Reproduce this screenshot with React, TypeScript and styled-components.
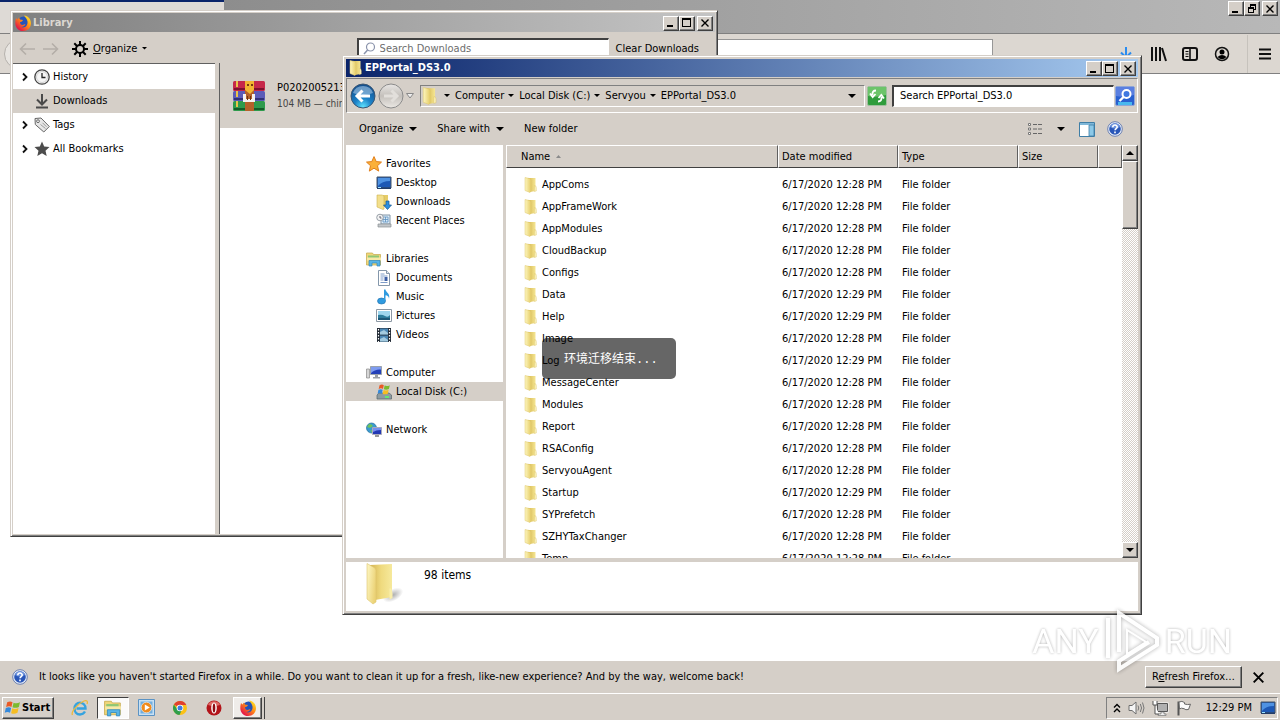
import React from 'react';
import styled, { createGlobalStyle, css } from 'styled-components';

const face = '#d5cfc8';
const GlobalStyle = createGlobalStyle`
  * { box-sizing: border-box; }
  body { margin: 0; overflow: hidden; background: #fff; }
  body, button, input, table {
    font-family: "DejaVu Sans Condensed", "DejaVu Sans", "Noto Sans CJK SC", sans-serif;
    font-size: 11px;
    line-height: 16px;
    color: #000;
  }
  svg { display: block; flex: none; }
  button { padding: 0; border: 0; background: none; white-space: nowrap; }
  ul { list-style: none; margin: 0; padding: 0; }
`;

const raised = css`
  border: 1px solid;
  border-color: #fff #404040 #404040 #fff;
  box-shadow: inset -1px -1px 0 #808080;
  background: ${face};
`;
const sunken = css`
  border: 1px solid;
  border-color: #808080 #fff #fff #808080;
`;

/* ---------- desktop and browser ---------- */
const Desktop = styled.div`
  position: relative;
  display: flex;
  flex-direction: column;
  height: 100vh;
  overflow: hidden;
`;
const TabStrip = styled.header`
  display: flex;
  justify-content: space-between;
  align-items: flex-start;
  height: 33px;
  background: linear-gradient(90deg, #848484, #b8b8b8);
`;
const BrowserTab = styled.div`
  width: 224px;
  height: 33px;
  border-top: 2px solid #0a246a;
  background: #dedad6;
`;
const CaptionButtons = styled.div`
  display: flex;
  padding: 1px 2px 0 0;
  button:last-child { margin-left: 2px; }
`;
const CaptionButton = styled.button`
  ${raised}
  display: flex;
  align-items: center;
  justify-content: center;
  width: 16px;
  height: 15px;
`;
const BrowserBar = styled.div`
  display: flex;
  align-items: center;
  height: 41px;
  padding: 0 7px 0 4px;
  border-top: 1px solid #808080;
  border-bottom: 1px solid #808080;
  background: #dcd7d1;
`;
const RoundBack = styled.button`
  width: 30px;
  height: 30px;
  border: 1px solid #b5b1ac;
  border-radius: 50%;
  background: #e8e5e1;
`;
const UrlInput = styled.input`
  flex: 1;
  height: 30px;
  margin: 0 124px 0 90px;
  border: 1px solid #979797;
  background: #fff;
`;
const BrowserTools = styled.div`
  display: flex;
  align-items: center;
  gap: 14px;
`;
const ToolButton = styled.button<{ $divided?: boolean }>`
  display: flex;
  align-items: center;
  justify-content: center;
  width: 18px;
  height: 38px;
  ${p => p.$divided && css`
    width: 26px;
    margin-left: 2px;
    padding-left: 8px;
    border-left: 1px solid #c6c2bc;
  `}
`;
const Page = styled.main`
  flex: 1;
  background: #fff;
`;
const Notice = styled.section`
  display: flex;
  align-items: center;
  height: 32px;
  padding: 0 16px 0 12px;
  background: ${face};
`;
const NoticeText = styled.p`
  flex: 1;
  margin: 0 0 0 11px;
  white-space: nowrap;
`;
const RefreshButton = styled.button`
  ${raised}
  width: 97px;
  height: 22px;
  margin-right: 11px;
`;

/* ---------- windows ---------- */
const Frame = styled.section`
  position: absolute;
  display: flex;
  flex-direction: column;
  padding: 2px;
  border: 1px solid;
  border-color: ${face} #404040 #404040 ${face};
  box-shadow: inset 1px 1px 0 #fff, inset -1px -1px 0 #808080;
  background: ${face};
`;
const LibraryFrame = styled(Frame)`
  left: 10px;
  top: 10px;
  width: 708px;
  height: 527px;
`;
const ExplorerFrame = styled(Frame)`
  left: 342px;
  top: 55px;
  width: 800px;
  height: 560px;
  padding: 3px;
`;
const TitleBar = styled.header<{ $active?: boolean }>`
  display: flex;
  align-items: center;
  height: ${p => (p.$active ? 18 : 19)}px;
  padding-left: 2px;
  gap: ${p => (p.$active ? 1 : 2)}px;
  color: ${p => (p.$active ? '#fff' : '#dcd8d2')};
  background: ${p => (p.$active
    ? 'linear-gradient(90deg, #0a246a, #a6caf0)'
    : 'linear-gradient(90deg, #808080, #c4c4c4)')};
`;
const Title = styled.h1`
  flex: 1;
  margin: 0;
  font-size: 11px;
  line-height: 16px;
`;
const LibraryBar = styled.div`
  display: flex;
  align-items: center;
  height: 31px;
  padding: 2px 16px 0 6px;
`;
const LibraryNav = styled.div`
  display: flex;
  gap: 6px;
`;
const LibraryMenu = styled.button`
  display: flex;
  align-items: center;
  gap: 5px;
  margin: 0 auto 0 13px;
`;
const DownloadSearch = styled.label`
  display: flex;
  align-items: center;
  gap: 4px;
  width: 252px;
  height: 22px;
  margin-right: 7px;
  padding: 0 4px;
  border: 1px solid;
  border-width: 2px 1px 1px 2px;
  border-color: #404040 #fff #fff #404040;
  background: #fff;
`;
const BareInput = styled.input`
  flex: 1;
  min-width: 0;
  padding: 0;
  border: 0;
  outline: 0;
  background: transparent;
  &::placeholder { color: #6d6d6d; opacity: 1; }
`;
const LibraryBody = styled.div`
  display: flex;
  flex: 1;
  min-height: 0;
`;
const LibraryTree = styled.ul`
  width: 202px;
  padding-top: 1px;
  border-top: 1px solid #606060;
  background: #fff;
`;
const TreeRow = styled.li<{ $selected?: boolean; $leaf?: boolean }>`
  display: flex;
  align-items: center;
  height: 24px;
  padding-left: ${p => (p.$leaf ? 21 : 5)}px;
  background: ${p => (p.$selected ? face : 'transparent')};
  svg:last-of-type { margin-right: 3px; }
`;
const DownloadPane = styled.div`
  flex: 1;
  margin-left: 4px;
  border-left: 1px solid #606060;
  background: #fff;
`;
const DownloadItem = styled.article`
  display: flex;
  align-items: center;
  gap: 12px;
  height: 65px;
  padding-left: 13px;
  background: ${face};
`;
const DownloadMeta = styled.div`
  display: flex;
  flex-direction: column;
  white-space: nowrap;
`;
const Small = styled.span`
  font-size: 10px;
  color: #444;
`;

/* ---------- explorer ---------- */
const NavBar = styled.div`
  ${sunken}
  display: flex;
  align-items: center;
  height: 35px;
  margin-top: 1px;
  padding: 0 2px 0 3px;
`;
const BackForward = styled.div`
  display: flex;
  align-items: center;
  gap: 2px;
  margin-right: 6px;
`;
const Address = styled.nav`
  ${sunken}
  display: flex;
  align-items: center;
  flex: 1;
  height: 22px;
  margin-right: 2px;
`;
const Crumb = styled.button`
  display: flex;
  align-items: center;
  gap: 4px;
  margin-left: 5px;
`;
const AddressDrop = styled.button`
  margin: 0 8px 0 auto;
`;
const IconButton = styled.button`
  display: flex;
  align-items: center;
  justify-content: center;
`;
const ExplorerSearch = styled.label`
  display: flex;
  width: 222px;
  height: 22px;
  margin: 0 1px 0 5px;
  padding: 1px 6px;
  border: 1px solid;
  border-width: 2px 1px 1px 2px;
  border-color: #404040 #fff #fff #404040;
  background: #fff;
`;
const CommandBar = styled.div`
  display: flex;
  align-items: center;
  height: 32px;
  padding: 0 15px 0 13px;
`;
const Command = styled.button<{ $gap?: number }>`
  display: flex;
  align-items: center;
  gap: 6px;
  margin-right: ${p => p.$gap ?? 14}px;
`;
const Spacer = styled.span`
  flex: 1;
`;
const ExplorerBody = styled.div`
  display: flex;
  flex: 1;
  min-height: 0;
`;
const Places = styled.nav`
  width: 157px;
  padding-top: 9px;
  background: #fff;
`;
const PlaceGroup = styled.ul`
  margin-bottom: 19px;
`;
const Place = styled.li<{ $child?: boolean; $selected?: boolean }>`
  padding-left: ${p => (p.$child ? 30 : 20)}px;
  background: ${p => (p.$selected ? face : 'transparent')};
  a {
    display: flex;
    align-items: center;
    gap: 4px;
    height: 19px;
    color: #000;
    text-decoration: none;
  }
`;
const ListPane = styled.div`
  flex: 1;
  min-width: 0;
  margin-left: 3px;
  overflow: hidden;
  background: #fff;
`;
const FileTable = styled.table`
  width: 100%;
  table-layout: fixed;
  border-collapse: separate;
  border-spacing: 0;
  tbody::before { content: ''; display: block; height: 6px; }
`;
const HeadCell = styled.th<{ $w?: number; $first?: boolean }>`
  width: ${p => (p.$w ? `${p.$w}px` : 'auto')};
  height: 23px;
  padding: 0 0 0 ${p => (p.$first ? 14 : 3)}px;
  border: 1px solid;
  border-color: #fff #606060 #404040 #fff;
  background: ${face};
  font-weight: 400;
  text-align: left;
`;
const HeadLabel = styled.span`
  display: flex;
  align-items: center;
  gap: 6px;
`;
const Cell = styled.td`
  height: 22px;
  padding: 0 0 0 4px;
  white-space: nowrap;
`;
const FileName = styled.span`
  display: flex;
  align-items: center;
  gap: 3px;
  padding-left: 13px;
`;
const ScrollBar = styled.div`
  display: flex;
  flex-direction: column;
  width: 16px;
  background: repeating-conic-gradient(#fff 0 25%, ${face} 0 50%) 0 0 / 2px 2px;
`;
const ScrollButton = styled.button`
  ${raised}
  display: flex;
  align-items: center;
  justify-content: center;
  height: 16px;
`;
const ScrollThumb = styled.div`
  ${raised}
  height: 68px;
  margin-bottom: auto;
`;
const Details = styled.footer`
  display: flex;
  height: 49px;
  margin-top: 4px;
  padding: 0 18px;
  background: #fff;
  font-size: 12px;
`;
const DetailsText = styled.span`
  margin: 5px 0 0 20px;
`;
const Toast = styled.div`
  position: absolute;
  left: 542px;
  top: 338px;
  width: 134px;
  height: 41px;
  padding-left: 22px;
  border-radius: 5px;
  background: rgba(0, 0, 0, 0.6);
  color: #fff;
  font: 12px/44px "Liberation Mono", "Noto Sans CJK SC", monospace;
  white-space: nowrap;
`;
const Watermark = styled.div`
  position: absolute;
  right: 48px;
  bottom: 46px;
  display: flex;
  align-items: center;
  gap: 4px;
  color: #fff;
  font: 34px/66px "Liberation Sans Narrow", "Roboto", sans-serif;
  text-shadow: 0 0 3px rgba(0, 0, 0, 0.35);
  opacity: 0.9;
  svg { filter: drop-shadow(0 0 2px rgba(0, 0, 0, 0.35)); }
`;

/* ---------- taskbar ---------- */
const TaskBar = styled.footer`
  display: flex;
  align-items: center;
  height: 27px;
  padding: 1px 2px 0;
  border-top: 1px solid #fff;
  background: ${face};
`;
const StartButton = styled.button`
  ${raised}
  display: flex;
  align-items: center;
  gap: 1px;
  width: 52px;
  height: 22px;
  margin-right: 9px;
  padding-left: 1px;
  font-weight: 700;
`;
const TaskButton = styled.button<{ $state?: 'open' | 'stacked' }>`
  display: flex;
  align-items: center;
  justify-content: center;
  width: 34px;
  height: 22px;
  ${p => p.$state === 'open' && css`
    width: 32px;
    border: 1px solid;
    border-color: #404040 #fff #fff #404040;
    background: #fbfaf9;
  `}
  ${p => p.$state === 'stacked' && css`
    ${raised}
    width: 29px;
    margin-left: 2px;
    background: #efece9;
    box-shadow: inset -1px -1px 0 #808080, 2px 0 0 ${face}, 3px 0 0 #404040;
  `}
`;
const Tray = styled.div`
  ${sunken}
  display: flex;
  align-items: center;
  gap: 7px;
  height: 22px;
  margin-left: auto;
  padding: 0 1px 0 6px;
`;
const Clock = styled.time`
  margin: 0 1px 0 7px;
`;

/* ---------- drawings ---------- */
const Down = ({ s = 8 }: { s?: number }) => (
  <svg width={s} height={s / 2} viewBox="0 0 8 4"><path d="M0 0h8L4 4z" /></svg>
);
const Minimize = () => <svg width="10" height="10"><path d="M1 7h6v2H1z" /></svg>;
const Maximize = () => (
  <svg width="10" height="10"><path fillRule="evenodd" d="M0 0h9v9H0zM1 2v6h7V2z" /></svg>
);
const Restore = () => (
  <svg width="10" height="10"><path fillRule="evenodd" d="M3 0h6v6H7v3H1V3h2zM4 2v1h3v2h1V2zM2 5v3h4V5z" /></svg>
);
const Close = ({ s = 8 }: { s?: number }) => (
  <svg width={s} height={s} viewBox="0 0 8 8"><path d="M.5.5l7 7m0-7l-7 7" stroke="#000" strokeWidth="1.4" /></svg>
);
const WindowButtons = ({ restore }: { restore?: boolean }) => (
  <CaptionButtons>
    <CaptionButton aria-label="Minimize"><Minimize /></CaptionButton>
    <CaptionButton aria-label="Maximize">{restore ? <Restore /> : <Maximize />}</CaptionButton>
    <CaptionButton aria-label="Close"><Close /></CaptionButton>
  </CaptionButtons>
);
const Folder = ({ s = 16 }: { s?: number }) => (
  <svg width={s} height={s} viewBox="0 0 16 16">
    <defs>
      <linearGradient id="fold" x1="0" x2="1"><stop stopColor="#fdf6bf" /><stop offset="1" stopColor="#e6cd68" /></linearGradient>
      <linearGradient id="foldBack" x1="0" x2="1"><stop stopColor="#d6b850" /><stop offset="1" stopColor="#f5e694" /></linearGradient>
    </defs>
    <path d="M5 1h7.500v13L7 15z" fill="url(#foldBack)" />
    <path d="M2 .500l4.500 1L8 3v11l-1 1.500-5-2z" fill="url(#fold)" stroke="#dfc76c" strokeWidth=".5" />
    <path d="M11.500 8.500q2 0 1.800 2.500v3l-2 .5z" fill="#fbf2bd" stroke="#d9bd58" strokeWidth=".4" />
  </svg>
);
const BigFolder = () => (
  <svg width="40" height="44" viewBox="0 0 40 44">
    <defs>
      <linearGradient id="bigA" x1="0" x2="1" y2=".4"><stop stopColor="#fdf7c4" /><stop offset="1" stopColor="#ecd377" /></linearGradient>
      <linearGradient id="bigB" x1="0" x2="1"><stop stopColor="#d3b251" /><stop offset=".5" stopColor="#efda7e" /><stop offset="1" stopColor="#f6e99c" /></linearGradient>
      <radialGradient id="bigS"><stop stopColor="#777" stopOpacity=".6" /><stop offset="1" stopColor="#777" stopOpacity="0" /></radialGradient>
    </defs>
    <ellipse cx="29" cy="33" rx="11" ry="6" fill="url(#bigS)" transform="rotate(-28 29 33)" />
    <path d="M6 3l22-1v33l-17 3z" fill="url(#bigB)" />
    <path d="M26 26q3 1 2.500 10l-3 1.500V27z" fill="#f9eeaa" />
    <path d="M3 1.500l8 4.500 1 2v32l-3 2-6-5z" fill="url(#bigA)" stroke="#dec56b" strokeWidth=".6" />
  </svg>
);
const Firefox = ({ s = 16 }: { s?: number }) => (
  <svg width={s} height={s} viewBox="0 0 16 16">
    <defs>
      <linearGradient id="fx" x1=".9" y1=".1" x2=".2" y2=".9"><stop stopColor="#ffe226" /><stop offset=".45" stopColor="#ff8a16" /><stop offset="1" stopColor="#e3124a" /></linearGradient>
    </defs>
    <circle cx="8.500" cy="7.500" r="6" fill="#2453b8" />
    <path d="M1 3l1.500 1.500L4 2.500 5 4.500l3 .5-1 1.500-2 .8c0 2 1.500 3 3.500 2.500l2-.8c-1 2.500-3 3.200-4.500 3 4 1.500 7-1.500 6.500-5.500C12 4 10.500 2.500 9 .5 13 1 16 4 16 8.500 15.800 13 12.500 16 8.200 16 3.500 16 .3 12.500.3 8.200.3 6 .6 4.500 1 3z" fill="url(#fx)" />
  </svg>
);
const Help = () => (
  <svg width="16" height="16" viewBox="0 0 16 16">
    <circle cx="8" cy="8" r="7.300" fill="#eaf0fa" stroke="#6a7fb0" />
    <circle cx="8" cy="8" r="5.800" fill="#2956b8" />
    <path d="M3 6a5.200 5.200 0 0 1 10 0q-5 3-10 0z" fill="#6d93dd" />
    <path d="M5.800 6.200c0-2.800 4.400-2.800 4.400-.2 0 1.500-2.100 1.600-2.100 3.200M8 10.500v1.700" fill="none" stroke="#fff" strokeWidth="1.600" />
  </svg>
);
const Screen = () => (
  <svg width="16" height="16" viewBox="0 0 16 16">
    <path d="M1 2h14v11H1z" fill="#1d58b5" stroke="#456" />
    <path d="M2 3h12v3Q6 6 2 11z" fill="#4f92e2" /><path d="M1 12.500h14v1.500H1z" fill="#233c68" /><path d="M2 12h3v1H2z" fill="#9be3ff" />
  </svg>
);
const Chevron = () => (
  <svg width="16" height="16" viewBox="0 0 16 16"><path d="M5 4.500L8.500 8 5 11.500" fill="none" stroke="#111" strokeWidth="1.800" /></svg>
);
const Star = ({ fill = '#4c4c4c', stroke = 'none' }: { fill?: string; stroke?: string }) => (
  <svg width="16" height="16" viewBox="0 0 16 16">
    <path d="M8 .6l2.200 5 5.300.5-4 3.600 1.200 5.400L8 12.200l-4.700 2.900 1.200-5.400-4-3.600 5.300-.5z" fill={fill} stroke={stroke} />
  </svg>
);
const ClockIcon = () => (
  <svg width="16" height="16" viewBox="0 0 16 16"><circle cx="8" cy="8" r="7.200" fill="#f5f5f5" stroke="#444" strokeWidth="1.300" /><circle cx="8" cy="8" r="5.500" fill="none" stroke="#bbb" strokeWidth=".6" /><path d="M8 4v4.500h3.500" fill="none" stroke="#222" strokeWidth="1.300" /></svg>
);
const DownloadArrow = ({ color = '#4a4a4a', bar = true }: { color?: string; bar?: boolean }) => (
  <svg width="16" height="16" viewBox="0 0 16 16"><path d={`M8 1v10M3 6.500l5 5 5-5${bar ? 'M2 14.500h12' : ''}`} fill="none" stroke={color} strokeWidth="2" /></svg>
);
const Tag = () => (
  <svg width="16" height="16" viewBox="0 0 16 16"><path d="M1 1.500l6-.5 8.300 8.500-5.500 5.500L1.300 7.500z" fill="#e7e7e7" stroke="#666" /><circle cx="4" cy="4.200" r="1.400" fill="#fff" stroke="#666" /><path d="M6.500 7.500l5 4M8.500 5.800l4 4" stroke="#999" /></svg>
);
const Gear = () => (
  <svg width="16" height="16" viewBox="0 0 16 16">
    <circle cx="8" cy="8" r="4" fill="none" stroke="#000" strokeWidth="2" />
    <path d="M8 0v4M8 12v4M0 8h4M12 8h4M2.300 2.300l2.900 2.900M10.800 10.800l2.900 2.900M13.700 2.300l-2.900 2.900M5.200 10.800l-2.900 2.900" stroke="#000" strokeWidth="2" />
  </svg>
);
const GhostArrow = ({ flip }: { flip?: boolean }) => (
  <svg width="17" height="14" viewBox="0 0 17 14"><path d={flip ? 'M1 7h14M10 1.500L15.500 7 10 12.500' : 'M2 7h14M7 1.500L1.500 7 7 12.500'} fill="none" stroke="#b4aea8" strokeWidth="1.600" /></svg>
);
const Magnifier = () => (
  <svg width="13" height="14" viewBox="0 0 13 14"><circle cx="7.500" cy="5" r="4" fill="none" stroke="#8a93ab" strokeWidth="1.200" /><path d="M4.600 8L1 12" stroke="#8a93ab" strokeWidth="1.500" /></svg>
);
const Archive = () => (
  <svg width="32" height="32" viewBox="0 0 32 32">
    <rect y="1" width="32" height="10" rx="1.500" fill="#c6284a" /><path d="M1 8h30v2H1z" fill="#7e1230" />
    <rect y="11" width="32" height="10" rx="1.500" fill="#5b5bb8" /><path d="M1 18h30v2H1z" fill="#303078" />
    <rect y="21" width="32" height="10" rx="1.500" fill="#2e9a4c" /><path d="M1 28h30v2H1z" fill="#145c28" />
    <path d="M4 1v29" stroke="#e9c24a" strokeWidth="2" strokeDasharray="6 4" />
    <path d="M12 1h9v30h-9z" fill="#b5612a" /><path d="M12 1h9v9l-4 4-5-4z" fill="#f2b632" /><path d="M14 4h2v2h-2zM18 4h2v2h-2z" fill="#7a3c10" />
    <path d="M10 14h12v8H10z" fill="#f5f2ee" /><path d="M13 14h6v5h-6z" fill="#b5612a" /><path d="M14 16h1v4h-1zM17 16h1v4h-1z" fill="#6d3310" />
  </svg>
);
const NavRound = ({ on }: { on?: boolean }) => (
  <svg width="26" height="26" viewBox="0 0 26 26">
    <defs>
      <radialGradient id="navOn" cx=".5" cy=".95" r=".9"><stop stopColor="#5fe3ff" /><stop offset=".4" stopColor="#1c82c8" /><stop offset="1" stopColor="#14508e" /></radialGradient>
      <linearGradient id="navOff" x2="0" y2="1"><stop stopColor="#e8e6e4" /><stop offset=".5" stopColor="#c4c0bb" /><stop offset="1" stopColor="#ebe8e4" /></linearGradient>
    </defs>
    <circle cx="13" cy="13" r="12" fill={on ? 'url(#navOn)' : 'url(#navOff)'} stroke={on ? '#3a5673' : '#8b8b8b'} />
    {on && <path d="M3 10a10.500 10 0 0 1 20 0q-10 4-20 0z" fill="#a6c8e6" opacity=".6" />}
    <path d={on ? 'M20 13H8M12.500 7.500L7 13l5.500 5.500' : 'M6 13h12M13.500 7.500L19 13l-5.500 5.500'} fill="none" stroke={on ? '#fff' : '#e2dfdb'} strokeWidth="3" />
  </svg>
);
const RefreshIcon = () => (
  <svg width="20" height="20" viewBox="0 0 20 20">
    <rect x=".5" y=".5" width="19" height="19" rx="1.500" fill="#2f9c3c" stroke="#9fbf9f" /><path d="M1 1h18v8Q9 12 1 10z" fill="#6cc46a" />
    <path d="M9 4.500Q5 4.500 5.500 9M3 7.500L5.700 11l2.800-3M11 15.500q4 0 3.500-4.500M17 12.500L14.300 9l-2.800 3" fill="none" stroke="#fff" strokeWidth="1.800" />
  </svg>
);
const SearchGo = () => (
  <svg width="20" height="20" viewBox="0 0 20 20">
    <rect x=".5" y=".5" width="19" height="19" rx="1.500" fill="#2860d0" stroke="#8fa6d6" /><path d="M1 1h18v8Q9 12 1 10z" fill="#5a7fe0" /><path d="M3 16h14v3H3z" fill="#49b8ee" />
    <circle cx="11.500" cy="8" r="4" fill="#3f78e0" stroke="#fff" strokeWidth="2" /><path d="M8.500 11L4.500 15" stroke="#fff" strokeWidth="2.400" />
  </svg>
);
const ViewIcon = () => (
  <svg width="16" height="14" viewBox="0 0 16 14"><path d="M1.500 1.500h2v2h-2zM1.500 6h2v2h-2zM1.500 10.500h2v2h-2z" fill="#fff" stroke="#777" /><path d="M6 2.500h9M6 7h9M6 11.500h9" stroke="#666" strokeDasharray="4 1" /></svg>
);
const PaneIcon = () => (
  <svg width="16" height="15" viewBox="0 0 16 15"><path d="M.5.500h15v14H.5z" fill="#fff" stroke="#3f7ea6" /><path d="M1 1h14v2H1z" fill="#7fb7d8" /><path d="M10 3h5v11h-5z" fill="#8cc9e8" stroke="#3f7ea6" strokeWidth=".8" /></svg>
);
const DownloadsIcon = () => (
  <svg width="16" height="16" viewBox="0 0 16 16"><path d="M7 1h5v12H7z" fill="#e5cc69" /><path d="M1 1h5l2 1v13l-1 .5L1 13z" fill="#f3df8c" stroke="#cfb24e" strokeWidth=".6" /><path d="M10 7h3v4h2.500l-4 4.500-4-4.500H10z" fill="#2c8fe0" stroke="#14568f" strokeWidth=".7" /></svg>
);
const RecentIcon = () => (
  <svg width="16" height="16" viewBox="0 0 16 16"><path d="M5 2h9v9H5z" fill="#dcecf8" stroke="#8295a6" /><path d="M7 4h5v5H7zM9.500 4v5M7 6.500h5" fill="none" stroke="#5d92c0" strokeWidth=".8" /><path d="M2 11h13v3H2z" fill="#c2c6ca" stroke="#8a8f94" strokeWidth=".7" /><circle cx="4" cy="4.500" r="3.300" fill="#f3f3f3" stroke="#98a0a8" /><path d="M4 3v2h1.500" fill="none" stroke="#667" /></svg>
);
const LibraryIcon = ({ s = 16 }: { s?: number }) => (
  <svg width={s} height={s} viewBox="0 0 16 16"><path d="M.5 2h6l1 1.500h7V14H.5z" fill="#f0d77a" stroke="#c4a748" strokeWidth=".7" /><path d="M2 4.500h11v3H2z" fill="#8fc774" /><path d="M1 6.500h14v3H1z" fill="#f7e9a6" /><path d="M3 15V9.500h11V15h-3v-3H6v3z" fill="#58b4e6" stroke="#2f87bd" strokeWidth=".7" /></svg>
);
const DocIcon = () => (
  <svg width="16" height="16" viewBox="0 0 16 16"><path d="M2.500.500h8l3 3v12h-11z" fill="#fff" stroke="#8497ab" /><path d="M10.500.5v3h3" fill="#dfe7ef" stroke="#8497ab" /><path d="M4.500 4h4M4.500 6h7M4.500 8h3M4.500 10h3M4.500 12.500h7" stroke="#7d9cc9" /><path d="M8.500 7h3v4h-3z" fill="#3b5fa6" /></svg>
);
const MusicIcon = () => (
  <svg width="16" height="16" viewBox="0 0 16 16"><ellipse cx="5.500" cy="12" rx="4" ry="3" fill="#2f9be0" stroke="#1a6aa8" strokeWidth=".6" /><path d="M8 12V.5h1.500C10 4 14.500 4 13 10c0-3-2-3.500-3.500-3.800V12z" fill="#2f9be0" /></svg>
);
const PictureIcon = () => (
  <svg width="16" height="14" viewBox="0 0 16 14"><path d="M.5.500h15v12H.5z" fill="#fff" stroke="#8c98a4" /><path d="M2 2h12v9H2z" fill="#9ed6ee" /><path d="M2 6q4-1 7 1t5-1v5H2z" fill="#2c7c9c" /><path d="M2 9h12v2H2z" fill="#1d5878" /></svg>
);
const VideoIcon = () => (
  <svg width="16" height="16" viewBox="0 0 16 16"><path d="M1 1h14v14H1z" fill="#222b36" /><path d="M4 1.500h8v6H4zM4 8.500h8v6H4z" fill="#4a86b4" /><path d="M4 5l4-2 4 3v1.500H4zM4 12l4-2 4 3v1.500H4z" fill="#a4cbe0" /><path d="M2.500 2v13M13.500 2v13" stroke="#fff" strokeWidth="1.200" strokeDasharray="1.500 1.500" /></svg>
);
const ComputerIcon = () => (
  <svg width="16" height="16" viewBox="0 0 16 16"><path d="M.5 4h3v9h-3z" fill="#d6d6d6" stroke="#888" strokeWidth=".7" /><path d="M4.500 1.500h11v8h-11z" fill="#2340b8" stroke="#9aa2ac" /><path d="M5 2h10v2.500Q9 4 5 8z" fill="#7e9cf0" /><path d="M9 10h3v2h2v1.500H7V12h2z" fill="#9a9fa6" /></svg>
);
const FlagPanes = () => (
  <>
    <path d="M3 2.500q3-1.500 5 0L7 7q-2-1.500-5 0z" fill="#ea5a26" />
    <path d="M9 3q3 1.300 6-.5L14 7q-3 1.500-6 .3z" fill="#7cba2e" />
    <path d="M1.700 8q3-1.500 5 0l-1 4.500q-2.500-1.500-5 0z" fill="#3489dc" />
    <path d="M7.700 8.300q3 1.200 6-.3l-1 4.500q-3 1.500-6 .3z" fill="#f6bd22" />
  </>
);
const Flag = () => <svg width="17" height="17" viewBox="0 0 16 15"><FlagPanes /></svg>;
const DiskIcon = () => (
  <svg width="16" height="16" viewBox="0 0 16 16"><path d="M1 11l2-2h10l2.500 2v4H1z" fill="#8d9ba2" stroke="#56646c" strokeWidth=".7" /><path d="M9 13h4" stroke="#5f6" strokeWidth="1.500" /><g transform="translate(1 -1) scale(.85)"><FlagPanes /></g></svg>
);
const NetworkIcon = () => (
  <svg width="16" height="16" viewBox="0 0 16 16"><circle cx="5.500" cy="6" r="5" fill="#3a9ad0" stroke="#26719c" strokeWidth=".7" /><path d="M3 2q3 0 4 2l-3 2-3-1zM4 8l3 1-1 2z" fill="#6ec35a" /><path d="M6.500 5.500h9v7h-9z" fill="#2238b4" stroke="#aab" /><path d="M7 6h8v2Q10 8 7 10z" fill="#7690ee" /><path d="M9 13h4v2H9z" fill="#999" /></svg>
);
const IE = () => (
  <svg width="18" height="18" viewBox="0 0 18 18"><path d="M14 12.500C12.500 15 10.500 15.500 9 15.500c-3.500 0-5.500-2.700-5.500-6S6 3.800 9 3.800s5.500 2.200 5.500 5.700h-9" fill="none" stroke="#36a3df" strokeWidth="2.400" /><path d="M1.500 16C-.5 13 7 4.500 13 2c3-1 4 .5 3 3" fill="none" stroke="#eeb93a" strokeWidth="1.300" /></svg>
);
const Player = () => (
  <svg width="17" height="17" viewBox="0 0 17 17"><path d="M.5.500h16v16H.5z" fill="#c8e0f3" stroke="#5b93c4" /><path d="M2.500 2.500h12v12h-12z" fill="#71aede" /><circle cx="8.500" cy="8.500" r="5.300" fill="#f08a1c" stroke="#fff" strokeWidth=".6" /><path d="M6.800 5.500l5 3-5 3z" fill="#fff" /></svg>
);
const Chrome = () => (
  <svg width="16" height="16" viewBox="0 0 16 16"><circle cx="8" cy="8" r="7" fill="#fbc116" /><path d="M8 8L1.900 4.500A7 7 0 0 1 14.300 5H8z" fill="#e0402f" /><path d="M8 8l-2.500 1.500L1.900 4.500A7 7 0 0 0 7.500 15L10 9.500z" fill="#2f9e4b" /><circle cx="8" cy="8" r="3.300" fill="#fff" /><circle cx="8" cy="8" r="2.500" fill="#3f7de0" /></svg>
);
const Opera = () => (
  <svg width="16" height="16" viewBox="0 0 16 16"><circle cx="8" cy="8" r="7.500" fill="#b3141a" /><path d="M2 5a6.500 6 0 0 1 12 0Q8 7 2 5z" fill="#df6a66" /><ellipse cx="8" cy="8" rx="2.800" ry="5.500" fill="#fff" /><ellipse cx="8" cy="8" rx="1.300" ry="4.500" fill="#8e0c12" /></svg>
);
const Speaker = () => (
  <svg width="17" height="16" viewBox="0 0 17 16"><path d="M1 5.500h3L8 2v12l-4-3.500H1z" fill="#f5f5f5" stroke="#6e6e6e" /><path d="M10 5.500q1.500 2.500 0 5M12.300 4q2.500 4 0 8M14.500 2.500q3 5.500 0 11" fill="none" stroke="#777" /></svg>
);
const TrayNetwork = () => (
  <svg width="17" height="16" viewBox="0 0 17 16"><path d="M5.500 3.500h10v8h-10z" fill="#bbb" stroke="#fff" strokeWidth="2" /><path d="M5.500 3.500h10v8h-10z" fill="#b0b0b0" stroke="#555" /><path d="M9 12h3v2h2v1.500H6V14h3z" fill="#eee" stroke="#666" strokeWidth=".6" /><path d="M1 1v4h4V1M3 5v9h4" fill="#fff" stroke="#555" /></svg>
);
const TrayFlag = () => (
  <svg width="16" height="16" viewBox="0 0 16 16"><path d="M2.500 1.500v14" stroke="#555" strokeWidth="2" /><path d="M3 2q3-1.500 5.500.5V4q3 1 6 .2l-2 5.300q-3 .8-4.500-.8Q5 7.500 3.500 9z" fill="#fbfbfb" stroke="#666" /></svg>
);
const LibraryTool = () => (
  <svg width="17" height="16" viewBox="0 0 17 16"><path d="M2 1v14M6 1v14M10 1v14M12 2l4 13" stroke="#111" strokeWidth="2" fill="none" /></svg>
);
const SidebarTool = () => (
  <svg width="16" height="14" viewBox="0 0 16 14"><rect x="1" y="1" width="14" height="12" rx="2" fill="none" stroke="#111" strokeWidth="2" /><path d="M8 1v12" stroke="#111" strokeWidth="1.600" /><path d="M3.500 4.500h3M3.500 7h3M3.500 9.500h3" stroke="#111" /></svg>
);
const Account = () => (
  <svg width="16" height="16" viewBox="0 0 16 16"><circle cx="8" cy="8" r="6.500" fill="none" stroke="#111" strokeWidth="1.500" /><circle cx="8" cy="6" r="2.500" /><path d="M3.500 11q4.500-4 9 0-4.500 4.500-9 0z" /></svg>
);
const Menu = () => <svg width="14" height="14"><path d="M1 2.500h12M1 7h12M1 11.500h12" stroke="#111" strokeWidth="2" /></svg>;

/* ---------- data ---------- */
const files: [string, number][] = [
  ['AppComs', 28], ['AppFrameWork', 28], ['AppModules', 28], ['CloudBackup', 28], ['Configs', 28],
  ['Data', 29], ['Help', 29], ['Image', 28], ['Log', 29], ['MessageCenter', 28], ['Modules', 28],
  ['Report', 28], ['RSAConfig', 28], ['ServyouAgent', 28], ['Startup', 29], ['SYPrefetch', 28],
  ['SZHYTaxChanger', 28], ['Temp', 28],
];
const places: { name: string; icon: React.ReactNode }[][] = [
  [
    { name: 'Favorites', icon: <Star fill="#fbb03a" stroke="#e07f1c" /> },
    { name: 'Desktop', icon: <Screen /> },
    { name: 'Downloads', icon: <DownloadsIcon /> },
    { name: 'Recent Places', icon: <RecentIcon /> },
  ],
  [
    { name: 'Libraries', icon: <LibraryIcon /> },
    { name: 'Documents', icon: <DocIcon /> },
    { name: 'Music', icon: <MusicIcon /> },
    { name: 'Pictures', icon: <PictureIcon /> },
    { name: 'Videos', icon: <VideoIcon /> },
  ],
  [
    { name: 'Computer', icon: <ComputerIcon /> },
    { name: 'Local Disk (C:)', icon: <DiskIcon /> },
  ],
  [{ name: 'Network', icon: <NetworkIcon /> }],
];

const Library = () => (
  <LibraryFrame>
    <TitleBar>
      <Firefox />
      <Title>Library</Title>
      <WindowButtons />
    </TitleBar>
    <LibraryBar>
      <LibraryNav>
        <IconButton aria-label="Back"><GhostArrow /></IconButton>
        <IconButton aria-label="Forward"><GhostArrow flip /></IconButton>
      </LibraryNav>
      <LibraryMenu><Gear /><span><u>O</u>rganize</span><Down s={5} /></LibraryMenu>
      <DownloadSearch>
        <Magnifier />
        <BareInput aria-label="Search Downloads" placeholder="Search Downloads" />
      </DownloadSearch>
      <button>Clear Downloads</button>
    </LibraryBar>
    <LibraryBody>
      <LibraryTree>
        <TreeRow><Chevron /><ClockIcon />History</TreeRow>
        <TreeRow $leaf $selected><DownloadArrow />Downloads</TreeRow>
        <TreeRow><Chevron /><Tag />Tags</TreeRow>
        <TreeRow><Chevron /><Star />All Bookmarks</TreeRow>
      </LibraryTree>
      <DownloadPane>
        <DownloadItem>
          <Archive />
          <DownloadMeta><span>P020200521327</span><Small>104 MB — chinatax</Small></DownloadMeta>
        </DownloadItem>
      </DownloadPane>
    </LibraryBody>
  </LibraryFrame>
);

const Explorer = () => (
  <ExplorerFrame>
    <TitleBar $active>
      <Folder />
      <Title>EPPortal_DS3.0</Title>
      <WindowButtons />
    </TitleBar>
    <NavBar>
      <BackForward>
        <IconButton aria-label="Back"><NavRound on /></IconButton>
        <IconButton aria-label="Forward"><NavRound /></IconButton>
        <IconButton aria-label="Recent pages">
          <svg width="8" height="6"><path d="M.5.500h7L4 5z" fill="#eee" stroke="#888" /></svg>
        </IconButton>
      </BackForward>
      <Address>
        <Folder s={18} />
        {['', 'Computer', 'Local Disk (C:)', 'Servyou'].map((c, i) => (
          <Crumb key={i} aria-label={c || 'Root'}>{c}<Down s={6} /></Crumb>
        ))}
        <Crumb>EPPortal_DS3.0</Crumb>
        <AddressDrop aria-label="Previous locations"><Down /></AddressDrop>
      </Address>
      <IconButton aria-label="Refresh"><RefreshIcon /></IconButton>
      <ExplorerSearch>
        <BareInput aria-label="Search" defaultValue="Search EPPortal_DS3.0" />
      </ExplorerSearch>
      <IconButton aria-label="Go"><SearchGo /></IconButton>
    </NavBar>
    <CommandBar>
      <Command $gap={20}>Organize<Down /></Command>
      <Command $gap={20}>Share with<Down /></Command>
      <Command>New folder</Command>
      <Spacer />
      <Command aria-label="Change view"><ViewIcon /></Command>
      <Command aria-label="More views"><Down /></Command>
      <Command $gap={12} aria-label="Preview pane"><PaneIcon /></Command>
      <IconButton aria-label="Help"><Help /></IconButton>
    </CommandBar>
    <ExplorerBody>
      <Places>
        {places.map((group, g) => (
          <PlaceGroup key={g}>
            {group.map((p, i) => (
              <Place key={p.name} $child={i > 0} $selected={p.name === 'Local Disk (C:)'}>
                <a href="#">{p.icon}{p.name}</a>
              </Place>
            ))}
          </PlaceGroup>
        ))}
      </Places>
      <ListPane>
        <FileTable>
          <thead>
            <tr>
              <HeadCell $first>
                <HeadLabel>Name<svg width="5" height="3"><path d="M0 3h5L2.500 0z" fill="#8a8a8a" /></svg></HeadLabel>
              </HeadCell>
              <HeadCell $w={120}>Date modified</HeadCell>
              <HeadCell $w={120}>Type</HeadCell>
              <HeadCell $w={80}>Size</HeadCell>
              <HeadCell $w={24} aria-label="More" />
            </tr>
          </thead>
          <tbody>
            {files.map(([name, min]) => (
              <tr key={name}>
                <Cell><FileName><Folder />{name}</FileName></Cell>
                <Cell>6/17/2020 12:{min} PM</Cell>
                <Cell>File folder</Cell>
                <Cell /><Cell />
              </tr>
            ))}
          </tbody>
        </FileTable>
      </ListPane>
      <ScrollBar>
        <ScrollButton aria-label="Scroll up"><svg width="8" height="4"><path d="M0 4h8L4 0z" /></svg></ScrollButton>
        <ScrollThumb />
        <ScrollButton aria-label="Scroll down"><Down /></ScrollButton>
      </ScrollBar>
    </ExplorerBody>
    <Details><BigFolder /><DetailsText>98 items</DetailsText></Details>
  </ExplorerFrame>
);

export default function App() {
  return (
    <Desktop>
      <GlobalStyle />
      <TabStrip><BrowserTab /><WindowButtons restore /></TabStrip>
      <BrowserBar>
        <RoundBack aria-label="Back" />
        <UrlInput aria-label="Address" />
        <BrowserTools>
          <ToolButton aria-label="Downloads"><DownloadArrow color="#2a8cf0" bar={false} /></ToolButton>
          <ToolButton aria-label="Library"><LibraryTool /></ToolButton>
          <ToolButton aria-label="Sidebars"><SidebarTool /></ToolButton>
          <ToolButton aria-label="Account"><Account /></ToolButton>
          <ToolButton $divided aria-label="Menu"><Menu /></ToolButton>
        </BrowserTools>
      </BrowserBar>
      <Page />
      <Notice>
        <Help />
        <NoticeText>It looks like you haven't started Firefox in a while. Do you want to clean it up for a fresh, like-new experience? And by the way, welcome back!</NoticeText>
        <RefreshButton>R<u>e</u>fresh Firefox…</RefreshButton>
        <IconButton aria-label="Dismiss"><Close s={11} /></IconButton>
      </Notice>
      <TaskBar>
        <StartButton><Flag />Start</StartButton>
        <TaskButton aria-label="Internet Explorer"><IE /></TaskButton>
        <TaskButton $state="open" aria-label="Explorer"><LibraryIcon s={18} /></TaskButton>
        <TaskButton aria-label="Media Player"><Player /></TaskButton>
        <TaskButton aria-label="Chrome"><Chrome /></TaskButton>
        <TaskButton aria-label="Opera"><Opera /></TaskButton>
        <TaskButton $state="stacked" aria-label="Firefox"><Firefox /></TaskButton>
        <Tray>
          <svg width="8" height="10"><path d="M1 4.500l3-3 3 3M1 9l3-3 3 3" fill="none" stroke="#000" strokeWidth="1.400" /></svg>
          <Speaker /><TrayNetwork /><TrayFlag />
          <Clock>12:29 PM</Clock>
          <Screen />
        </Tray>
      </TaskBar>
      <Library />
      <Explorer />
      <Toast>环境迁移结束...</Toast>
      <Watermark>
        ANY
        <svg width="58" height="66" viewBox="0 0 58 66" fill="none" stroke="#fff">
          <path d="M5 10v40" strokeWidth="4" />
          <path d="M16 44V5l38 25v7L16 61v-8l30-19" strokeWidth="4" />
          <path d="M24 22v24l19-12z" strokeWidth="2" />
        </svg>
        RUN
      </Watermark>
    </Desktop>
  );
}
